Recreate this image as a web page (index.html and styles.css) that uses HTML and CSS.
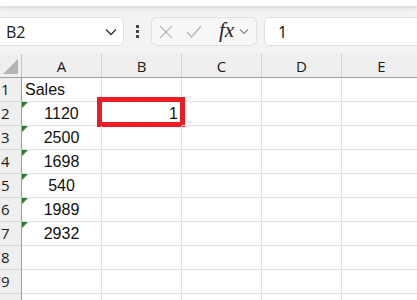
FILE: index.html
```html
<!DOCTYPE html>
<html lang="en">
<head>
    <meta charset="UTF-8">
    <title>Sales</title>
    <link rel="stylesheet" href="styles.css">
</head>
<body>

    <div class="top-strip"></div>

    <div class="formula-bar">
        <div class="name-box">
            <span class="name-text">B2</span>
            <svg class="chevron" width="12" height="8" viewBox="0 0 12 8"><polyline points="1,1.5 6,6.5 11,1.5" fill="none" stroke="#333" stroke-width="1.3"/></svg>
        </div>
        <div class="dots"><span></span><span></span><span></span></div>
        <div class="func-box">
            <svg class="icon-x" width="14" height="14" viewBox="0 0 14 14"><path d="M1 1 L13 13 M13 1 L1 13" stroke="#b8b8b8" stroke-width="1.3"/></svg>
            <svg class="icon-check" width="16" height="13" viewBox="0 0 16 13"><polyline points="1,7 5.5,12 15,1" fill="none" stroke="#b8b8b8" stroke-width="1.3"/></svg>
            <span class="fx">fx</span>
            <svg class="chevron small" width="10" height="7" viewBox="0 0 10 7"><polyline points="1,1.5 5,5.5 9,1.5" fill="none" stroke="#888" stroke-width="1.2"/></svg>
        </div>
        <div class="formula-input">1</div>
    </div>

    <div class="sheet">
        <div class="corner"><div class="corner-tri"></div></div>
        <div class="col-head">A</div>
        <div class="col-head">B</div>
        <div class="col-head">C</div>
        <div class="col-head">D</div>
        <div class="col-head">E</div>

        <div class="row-head">1</div>
        <div class="cell">Sales</div>
        <div class="cell"></div><div class="cell"></div><div class="cell"></div><div class="cell"></div>

        <div class="row-head">2</div>
        <div class="cell num flag">1120</div>
        <div class="cell right selected">1</div>
        <div class="cell"></div><div class="cell"></div><div class="cell"></div>

        <div class="row-head">3</div>
        <div class="cell num flag">2500</div>
        <div class="cell"></div><div class="cell"></div><div class="cell"></div><div class="cell"></div>

        <div class="row-head">4</div>
        <div class="cell num flag">1698</div>
        <div class="cell"></div><div class="cell"></div><div class="cell"></div><div class="cell"></div>

        <div class="row-head">5</div>
        <div class="cell num flag">540</div>
        <div class="cell"></div><div class="cell"></div><div class="cell"></div><div class="cell"></div>

        <div class="row-head">6</div>
        <div class="cell num flag">1989</div>
        <div class="cell"></div><div class="cell"></div><div class="cell"></div><div class="cell"></div>

        <div class="row-head">7</div>
        <div class="cell num flag">2932</div>
        <div class="cell"></div><div class="cell"></div><div class="cell"></div><div class="cell"></div>

        <div class="row-head">8</div>
        <div class="cell"></div><div class="cell"></div><div class="cell"></div><div class="cell"></div><div class="cell"></div>

        <div class="row-head">9</div>
        <div class="cell"></div><div class="cell"></div><div class="cell"></div><div class="cell"></div><div class="cell"></div>

        <div class="row-head"></div>
        <div class="cell"></div><div class="cell"></div><div class="cell"></div><div class="cell"></div><div class="cell"></div>
    </div>

</body>
</html>
```

FILE: styles.css
```css
body {
    margin: 0;
    background-color: #f3f3f3;
    font-family: "Liberation Sans", Arial, sans-serif;
    color: #111;
    overflow: hidden;
    height: 300px;
}

.top-strip {
    height: 6px;
    background-color: #ffffff;
    box-shadow: 0 2px 5px rgba(0, 0, 0, 0.12);
}

.formula-bar {
    display: flex;
    align-items: center;
    height: 29px;
    padding: 11px 0 8px 0;
}

.name-box {
    box-sizing: border-box;
    width: 129px;
    height: 29px;
    margin-left: -5px;
    padding: 0 6px 0 10px;
    display: flex;
    align-items: center;
    justify-content: space-between;
    background-color: #ffffff;
    border: 1px solid #e0e0e0;
    border-radius: 6px;
    font-family: "Open Sans", "Noto Sans", sans-serif;
    font-size: 16px;
    color: #1a1a1a;
}

.dots {
    width: 27px;
    display: flex;
    flex-direction: column;
    align-items: center;
    gap: 2px;
}

.dots span {
    width: 3px;
    height: 3px;
    background-color: #444;
}

.func-box {
    box-sizing: border-box;
    width: 106px;
    height: 29px;
    display: flex;
    align-items: center;
    padding: 0 4px 0 7px;
    background-color: #f7f7f7;
    border: 1px solid #e0e0e0;
    border-radius: 6px;
}

.icon-x {
    margin-right: 13px;
}

.icon-check {
    margin-right: 17px;
}

.fx {
    font-family: "Liberation Serif", "Times New Roman", serif;
    font-style: italic;
    font-size: 21px;
    color: #222;
    margin-right: 5px;
    margin-top: -3px;
}

.formula-input {
    box-sizing: border-box;
    flex: 1;
    height: 29px;
    margin-left: 7px;
    margin-right: -10px;
    padding-left: 13px;
    display: flex;
    align-items: center;
    background-color: #ffffff;
    border: 1px solid #e0e0e0;
    border-radius: 6px;
    font-family: "Open Sans", "Noto Sans", sans-serif;
    font-size: 16px;
}

.sheet {
    display: grid;
    grid-template-columns: 22px repeat(5, 80px);
    grid-template-rows: 24px;
    grid-auto-rows: 24px;
    background-color: #ffffff;
}

.corner,
.col-head {
    box-sizing: border-box;
    background-color: #efefef;
    border-bottom: 1px solid #9e9e9e;
}

.corner {
    position: relative;
    border-right: 1px solid #c6c6c6;
}

.corner-tri {
    position: absolute;
    right: 3px;
    bottom: 3px;
    width: 0;
    height: 0;
    border-left: 15px solid transparent;
    border-bottom: 15px solid #b4b4b4;
}

.col-head {
    display: flex;
    align-items: center;
    justify-content: center;
    border-right: 1px solid #d2d2d2;
    font-family: "Open Sans", "Noto Sans", sans-serif;
    font-size: 15px;
    color: #1a1a1a;
}

.row-head {
    box-sizing: border-box;
    background-color: #efefef;
    border-right: 1px solid #9e9e9e;
    border-bottom: 1px solid #d6d6d6;
    padding-left: 1px;
    font-family: "Open Sans", "Noto Sans", sans-serif;
    font-size: 15px;
    line-height: 23px;
    color: #1a1a1a;
    overflow: hidden;
}

.cell {
    box-sizing: border-box;
    position: relative;
    border-right: 1px solid #e1e1e1;
    border-bottom: 1px solid #e1e1e1;
    padding: 0 3px;
    font-size: 16px;
    line-height: 23px;
}

.cell.num {
    text-align: center;
}

.cell.right {
    text-align: right;
}

/* little green triangle: number stored as text */
.cell.flag::before {
    content: "";
    position: absolute;
    left: 0;
    top: 0;
    border-top: 6px solid #1e7c32;
    border-right: 6px solid transparent;
}

.cell.selected::after {
    content: "";
    position: absolute;
    left: -5px;
    top: -5px;
    right: -4px;
    bottom: -2px;
    border: 5px solid #ec1c24;
}
```
